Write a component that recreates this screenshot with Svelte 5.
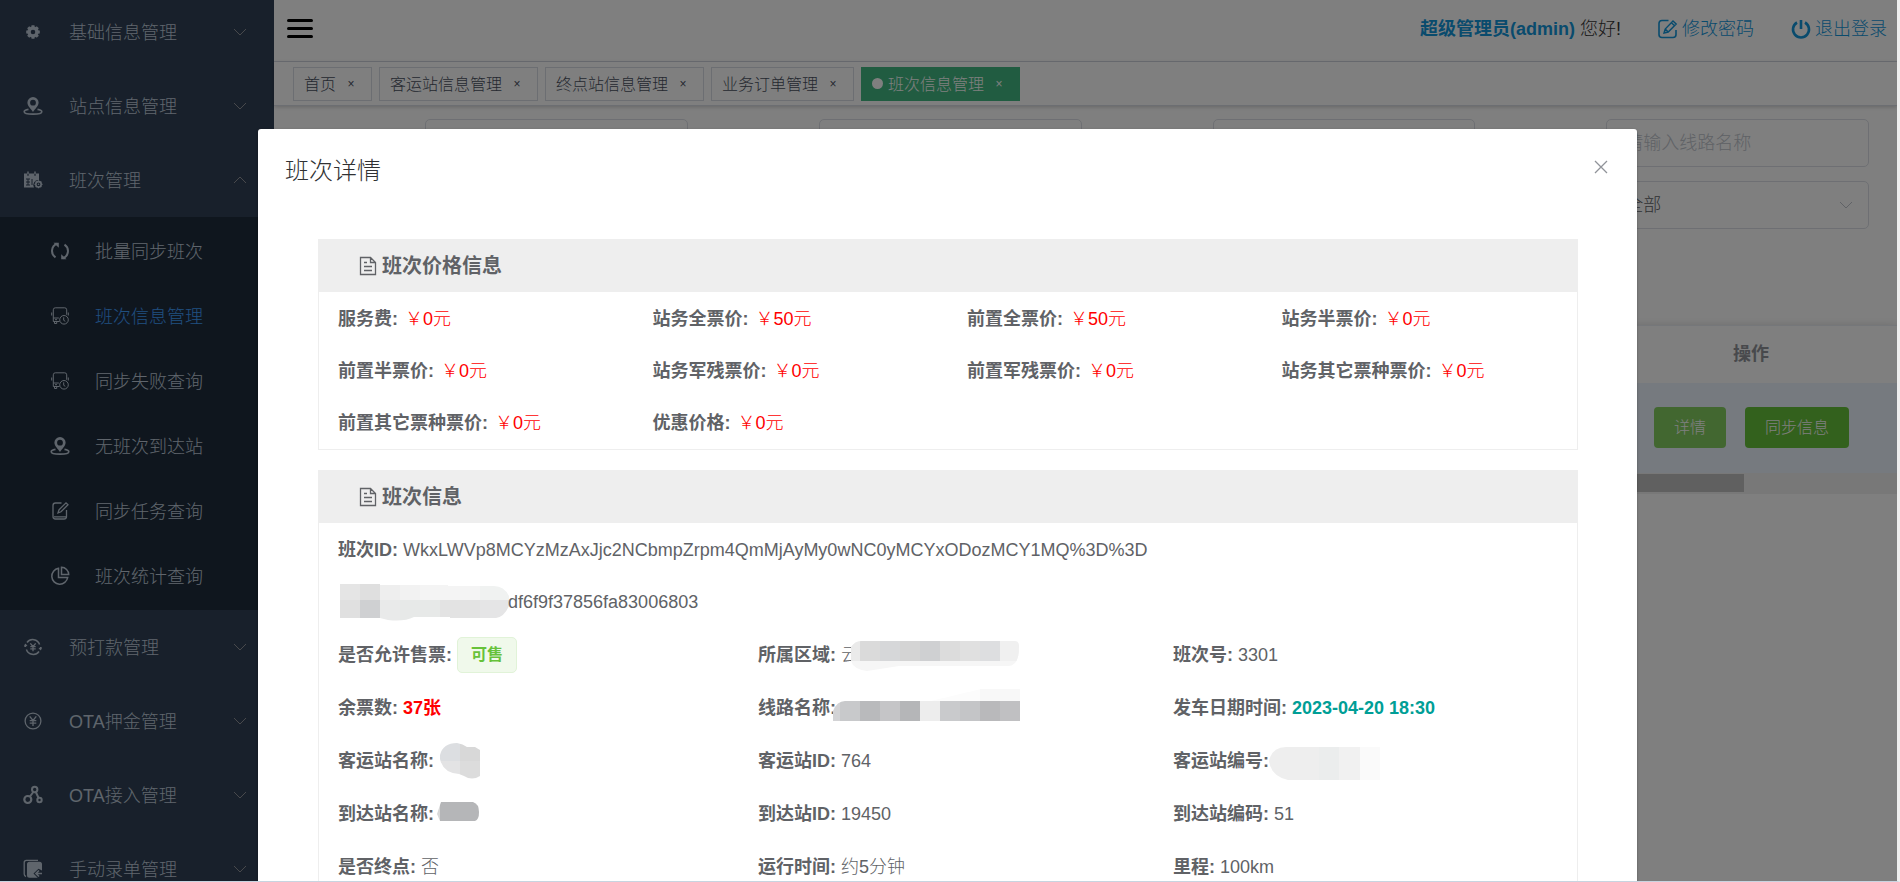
<script>
    const menu = [
        { label: '基础信息管理', icon: 'gear' },
        { label: '站点信息管理', icon: 'pin' },
        {
            label: '班次管理',
            icon: 'calendar',
            children: [
                { label: '批量同步班次', icon: 'sync' },
                { label: '班次信息管理', icon: 'bus', active: true },
                { label: '同步失败查询', icon: 'bus' },
                { label: '无班次到达站', icon: 'pin' },
                { label: '同步任务查询', icon: 'edit' },
                { label: '班次统计查询', icon: 'pie' }
            ]
        },
        { label: '预打款管理', icon: 'yenCycle' },
        { label: 'OTA押金管理', icon: 'yen' },
        { label: 'OTA接入管理', icon: 'nodes' },
        { label: '手动录单管理', icon: 'record' }
    ];

    let tabs = $state([
        { label: '首页' },
        { label: '客运站信息管理' },
        { label: '终点站信息管理' },
        { label: '业务订单管理' },
        { label: '班次信息管理', active: true }
    ]);

    const prices = [
        ['服务费', 0],
        ['站务全票价', 50],
        ['前置全票价', 50],
        ['站务半票价', 0],
        ['前置半票价', 0],
        ['站务军残票价', 0],
        ['前置军残票价', 0],
        ['站务其它票种票价', 0],
        ['前置其它票种票价', 0],
        ['优惠价格', 0]
    ];

    // blocks: [x, y, width, height, colour], y counted from the middle of the row
    const masks = {
        token: {
            width: 170,
            clip: 'M2 -18H42V-17H110V-16H156Q166 -16 171 -6V4Q166 15 158 16H112V15H76Q66 20 50 18L42 16H2Z',
            blocks: [
                [2, -18, 20, 18, '#e5e5e5'], [22, -18, 20, 18, '#dfdfdf'], [42, -18, 20, 18, '#eeeeee'],
                [62, -18, 20, 18, '#f2f2f2'], [82, -18, 60, 18, '#f4f4f4'], [142, -18, 30, 18, '#f0f2f1'],
                [2, -2, 20, 20, '#e0e0e0'], [22, -2, 20, 20, '#cfd0d2'], [42, -2, 20, 22, '#e9eaea'],
                [62, -2, 40, 22, '#e7e9e8'], [102, -2, 40, 20, '#e3e3e3'], [142, -2, 30, 20, '#e5e5e6']
            ]
        },
        region: {
            width: 150,
            clip: 'M-8 -8Q-4 -14 2 -14H156Q160 -14 160 -8Q160 10 150 11H40L8 16Q-6 14 -8 6Z',
            blocks: [
                [-9, -14, 170, 30, '#f6f6f6'], [-9, -14, 10, 20, '#eaeaea'], [1, -14, 20, 20, '#dadada'],
                [21, -14, 20, 20, '#d6d7d9'], [41, -14, 20, 20, '#d4d4d4'], [61, -14, 20, 20, '#cfd0d2'],
                [81, -14, 20, 20, '#dcdcdc'], [101, -14, 20, 20, '#e0e0e0'], [121, -14, 20, 20, '#dddee0'],
                [141, -14, 20, 20, '#f0f0f0']
            ]
        },
        line: {
            width: 180,
            clip: 'M-8 13V3Q-4 -7 4 -7H90L140 -19H179V13Z',
            blocks: [
                [90, -19, 50, 12, '#fcfcfc'], [139, -19, 40, 12, '#f8f8f8'], [-8, -7, 7, 20, '#d3d3d5'],
                [-1, -7, 20, 20, '#c8c9cb'], [19, -7, 20, 20, '#b9babc'], [39, -7, 20, 20, '#c5c5c7'],
                [59, -7, 20, 20, '#b5b6b8'], [79, -7, 20, 20, '#ededed'], [99, -7, 20, 20, '#c9cacc'],
                [119, -7, 20, 20, '#c4c5c7'], [139, -7, 20, 20, '#b9b9bb'], [159, -7, 20, 20, '#c0c0c2']
            ]
        },
        station: {
            width: 42,
            clip: 'M1 -6Q4 -18 18 -18Q24 -17 28 -14H36L41 -11V15Q33 20 25 15L20 13Q4 12 1 -2Z',
            blocks: [
                [1, -18, 20, 18, '#dcdee1'], [21, -18, 20, 18, '#d8d8d8'],
                [1, 0, 20, 18, '#e3e3e4'], [21, 0, 20, 18, '#dcdcdc']
            ]
        },
        code: {
            width: 108,
            clip: 'M-5 0Q-2 -14 12 -14H106V19H14Q-3 15 -5 0Z',
            blocks: [
                [-5, -14, 50, 33, '#eeeeee'], [45, -14, 20, 33, '#ebeded'],
                [65, -14, 21, 33, '#f1f1f1'], [86, -14, 20, 33, '#fafafa']
            ]
        },
        arrival: {
            width: 40,
            clip: 'M-2 0L2 -12H34Q40 -10 40 -2Q40 6 36 7H1Z',
            blocks: [[-2, -13, 3, 20, '#d8d8d8'], [1, -13, 40, 20, '#b5b6b8']]
        }
    };

    const details = [
        { label: '是否允许售票', kind: 'tag', value: '可售' },
        { label: '所属区域', value: '云', mask: 'region' },
        { label: '班次号', value: '3301' },
        { label: '余票数', kind: 'red', value: '37张' },
        { label: '线路名称', mask: 'line' },
        { label: '发车日期时间', kind: 'teal', value: '2023-04-20 18:30' },
        { label: '客运站名称', mask: 'station' },
        { label: '客运站ID', value: '764' },
        { label: '客运站编号', mask: 'code' },
        { label: '到达站名称', mask: 'arrival' },
        { label: '到达站ID', value: '19450' },
        { label: '到达站编码', value: '51' },
        { label: '是否终点', value: '否' },
        { label: '运行时间', value: '约5分钟' },
        { label: '里程', value: '100km' }
    ];

    const queries = ['班次ID', '客运站名称', '到达站名称'];

    let visible = $state(true);

    function closeTab(tab) {
        tabs = tabs.filter(t => t.label !== tab.label);
    }
</script>

{#snippet icon(name)}
    <svg class="icon" viewBox="0 0 20 20" fill="none" stroke="currentColor" stroke-width="1.3" aria-hidden="true">
        {#if name === 'gear'}
            <circle cx="10" cy="10" r="4" stroke-width="3.4" />
            <path d="M10 3.2v2M10 14.8v2M3.2 10h2M14.8 10h2M5.2 5.2l1.4 1.4M13.4 13.4l1.4 1.4M5.2 14.8l1.4-1.4M13.4 6.6l1.4-1.4" stroke-width="3" />
        {:else if name === 'pin'}
            <path fill="currentColor" stroke="none" fill-rule="evenodd" d="M10 1a5.6 5.6 0 0 1 5.6 5.6c0 3.4-3.4 6.2-5.6 9.4-2.2-3.2-5.6-6-5.6-9.4A5.6 5.6 0 0 1 10 1zm0 2.8a2.9 2.9 0 1 0 0 5.8 2.9 2.9 0 0 0 0-5.8z" />
            <path d="M5.5 13.4C3 13.8 1.2 14.7 1.2 15.7c0 1.5 4 2.4 8.8 2.4s8.8-.9 8.800-2.400c0-1-1.800-1.900-4.300-2.300" stroke-width="1.6" />
        {:else if name === 'calendar'}
            <path fill="currentColor" stroke="none" d="M1 3.5h3v2h2v-2h5v2h2v-2h3V10a5 5 0 0 0-5 7.500H1z" />
            <path d="M5 1.5v3M12 1.5v3" stroke-width="1.5" />
            <path d="M3 9h4M5 9v6M3 12h4M3 15h4M9 9v6" stroke="#304156" stroke-width="1" />
            <circle cx="15.5" cy="14.3" r="2.7" stroke-width="1.6" />
            <path d="M15.5 10.300v1.300M15.500 17v1.300M11.500 14.300h1.300M18.200 14.300h1.300M12.700 11.500l1 1M17.300 16.100l1 1M12.700 17.100l1-1M17.300 12.500l1-1" />
            <circle cx="15.5" cy="14.3" r=".8" fill="currentColor" stroke="none" />
        {:else if name === 'sync'}
            <path d="M7 2.8a7.6 7.6 0 0 0-1.5 13.500M13 17.200a7.600 7.600 0 0 0 1.500-13.500" stroke-width="2" />
            <path d="M3.5 1.8h5.300v5zM16.500 18.200h-5.300v-5z" fill="currentColor" stroke="none" />
        {:else if name === 'bus'}
            <g stroke-width="1">
                <path d="M9.5 15.5H3.3V3.8q0-2 2-2h9.400q2 0 2 2v5M3.300 12h5.500M1.700 6.500v3M18.300 6.500v3M4.500 15.500v2h2.200v-2M5 13.700h2" />
                <circle cx="14" cy="13.8" r="4.3" />
                <path d="M13.7 11.300v3l1.600 1" />
            </g>
        {:else if name === 'edit'}
            <path d="M11.5 2H5.5Q3 2 3 4.500v11Q3 18 5.500 18h8.500q2.500 0 2.500-2.500V9M4 15.800h12" />
            <path d="M8 12l1-3.200L16 1.800l2 2-7 7z" />
        {:else if name === 'pie'}
            <path d="M8.5 2.300a8 8 0 1 0 9.200 9.200H8.500z" stroke-width="1.5" />
            <path d="M11.5 1.300a7.300 7.300 0 0 1 7.200 7.200h-7.200z" stroke-width="1.5" />
        {:else if name === 'yen'}
            <circle cx="10" cy="10" r="7.9" />
            <path d="M6.7 5.300L10 9.500l3.300-4.200M10 9.500v5.500M6.700 9.700h6.600M6.700 12.200h6.600" />
        {:else if name === 'yenCycle'}
            <path d="M4 5.500a7.200 7.200 0 0 1 12.600 2M16 14.500a7.200 7.200 0 0 1-12.600-2M2.300 10V7.500M17.700 10v2.500" stroke-width="1.5" />
            <path d="M1 9.500l1.500-3 2 2.500zM19 10.500l-1.500 3-2-2.500z" fill="currentColor" stroke="none" />
            <path d="M7.300 6.300L10 9.500l2.700-3.200M10 9.500v4.700M7.300 9.700h5.400M7.300 11.800h5.400" />
        {:else if name === 'nodes'}
            <circle cx="11.7" cy="4.5" r="2.7" stroke-width="2" />
            <circle cx="4.8" cy="14.5" r="3.5" stroke-width="2.2" />
            <circle cx="16.5" cy="15" r="2.2" stroke-width="2" />
            <path d="M10.300 7L7 11.500M12.800 7l2.800 6" stroke-width="2" />
        {:else if name === 'record'}
            <path d="M3 17.500Q1.200 17 1.200 15V3.500q0-2.200 2.200-2.200H15" />
            <path fill="currentColor" stroke="none" d="M6.500 2.800h10q2.500 0 2.500 2.500v6.200l-3.500-1.700-5 4.700 4.200 4.300H6.500Q4 18.800 4 16.300v-11q0-2.500 2.500-2.500z" />
            <path d="M16 11.500l-3 3 3 3M13.300 14.500H19" stroke-width="1.7" />
        {:else if name === 'doc'}
            <path d="M2.500 1.500h10l5 5v12h-15zM12.500 1.500v5h5M6 6.500h3M6 10.500h8M6 14.500h8" />
        {:else if name === 'write'}
            <path d="M10.500 1.500H4Q1 1.500 1 4.500v11q0 3 3 3h11q3 0 3-3V11" stroke-width="1.6" />
            <path d="M6 14l1.200-4L15 2l3.200 3-8 8zM13.500 3.700l3 3M7.200 10l3 3" stroke-width="1.4" />
        {:else if name === 'power'}
            <path d="M6 3.500a8 8 0 1 0 8 0M10 1v9" stroke-width="2.6" />
        {/if}
    </svg>
{/snippet}

{#snippet arrow(up)}
    <svg class="arrow" class:up viewBox="0 0 12 12" fill="none" stroke="currentColor" aria-hidden="true">
        <path d="M0 3l6 6 6-6" />
    </svg>
{/snippet}

{#snippet mosaic(name)}
    <svg class="mosaic" width={masks[name].width} height="36" viewBox="0 -18 {masks[name].width} 36" aria-hidden="true">
        <clipPath id="clip-{name}"><path d={masks[name].clip} /></clipPath>
        <g clip-path="url(#clip-{name})">
            {#each masks[name].blocks as [x, y, width, height, fill]}
                <rect {x} {y} {width} {height} {fill} />
            {/each}
        </g>
    </svg>
{/snippet}

<div class="app">
    <nav class="sidebar">
        <ul class="menu">
            {#each menu as item}
                <li>
                    <a class="menu-item" href="#menu">
                        {@render icon(item.icon)}
                        <span>{item.label}</span>
                        {@render arrow(!!item.children)}
                    </a>
                    {#if item.children}
                        <ul class="submenu">
                            {#each item.children as child}
                                <li>
                                    <a class="submenu-item" class:active={child.active} href="#menu">
                                        {@render icon(child.icon)}
                                        <span>{child.label}</span>
                                    </a>
                                </li>
                            {/each}
                        </ul>
                    {/if}
                </li>
            {/each}
        </ul>
    </nav>

    <main class="main">
        <header class="navbar">
            <button class="hamburger" aria-label="菜单"><i></i><i></i><i></i></button>
            <div class="user">
                <span class="hello"><b>超级管理员(admin)</b> 您好!</span>
                <a href="#password">{@render icon('write')}修改密码</a>
                <a href="#logout">{@render icon('power')}退出登录</a>
            </div>
        </header>

        <div class="tags">
            {#each tabs as tab (tab.label)}
                <div class="tag-view" class:active={tab.active}>
                    <a href="#tab">{tab.label}</a>
                    <button aria-label="关闭" onclick={() => closeTab(tab)}>×</button>
                </div>
            {/each}
        </div>

        <form class="filters">
            {#each queries as query}
                <input type="text" aria-label={query} />
            {/each}
            <input type="text" aria-label="线路名称" placeholder="请输入线路名称" />
            <div class="select">
                <select aria-label="状态">
                    <option>全部</option>
                </select>
                {@render arrow(false)}
            </div>
        </form>

        <div class="table-wrap">
            <table>
                <thead>
                    <tr><th>操作</th></tr>
                </thead>
                <tbody>
                    <tr>
                        <td>
                            <div class="actions">
                                <button class="light">详情</button>
                                <button>同步信息</button>
                            </div>
                        </td>
                    </tr>
                </tbody>
            </table>
            <div class="scroll-track"><div class="scroll-thumb"></div></div>
        </div>
    </main>

    {#if visible}
        <div class="overlay">
            <div class="dialog" role="dialog" aria-modal="true" aria-labelledby="dialog-title">
                <div class="dialog-header">
                    <h2 id="dialog-title">班次详情</h2>
                    <button class="close" aria-label="关闭" onclick={() => (visible = false)}>
                        <svg viewBox="0 0 14 14" fill="none" stroke="currentColor" stroke-width="1.3">
                            <path d="M1 1l12 12M13 1L1 13" />
                        </svg>
                    </button>
                </div>

                <section class="panel">
                    <h3>{@render icon('doc')}班次价格信息</h3>
                    <div class="grid prices">
                        {#each prices as [label, price]}
                            <div class="field"><b>{label}:</b><span class="price">￥{price}元</span></div>
                        {/each}
                    </div>
                </section>

                <section class="panel">
                    <h3>{@render icon('doc')}班次信息</h3>
                    <div class="grid">
                        <div class="field"><b>班次ID:</b><span>WkxLWVp8MCYzMzAxJjc2NCbmpZrpm4QmMjAyMy0wNC0yMCYxODozMCY1MQ%3D%3D</span></div>
                        <div class="field hash">{@render mosaic('token')}<span>df6f9f37856fa83006803</span></div>
                    </div>
                    <div class="grid details">
                        {#each details as item}
                            <div class="field">
                                <b>{item.label}:</b>
                                <span class={item.kind}>{item.value}{#if item.mask}{@render mosaic(item.mask)}{/if}</span>
                            </div>
                        {/each}
                    </div>
                </section>
            </div>
        </div>
    {/if}
</div>

<style>
    :global(body) {
        overflow: hidden;
        background: #fff;
    }

    .app {
        --text: #606266;
        position: relative;
        display: flex;
        height: 100vh;
        box-sizing: border-box;
        overflow: hidden;
        border-right: 3px solid #eee;
        border-bottom: 1px solid #c8d4e0;
        font: 300 18px/24px "Liberation Sans", "Noto Sans CJK SC", sans-serif;
        color: var(--text);
    }

    a {
        color: inherit;
        text-decoration: none;
    }

    button,
    input,
    select {
        font: inherit;
    }

    button {
        padding: 0;
        border: 0;
        background: none;
        color: inherit;
        cursor: pointer;
    }

    .icon {
        width: 20px;
        height: 20px;
        flex-shrink: 0;
    }

    .arrow {
        width: 12px;
        height: 12px;
        flex-shrink: 0;
    }

    .arrow.up {
        transform: rotate(180deg);
    }

    /* sidebar */
    .sidebar {
        width: 274px;
        flex-shrink: 0;
        overflow: hidden;
        background: #304156;
        color: #bfcbd9;
    }

    .menu,
    .submenu {
        margin: 0;
        padding: 0;
        list-style: none;
    }

    /* list is scrolled down a little */
    .menu {
        margin-top: -5px;
    }

    .menu-item,
    .submenu-item {
        display: flex;
        align-items: center;
    }

    .menu-item span,
    .submenu-item span {
        padding-top: 2px;
    }

    .menu-item {
        height: 74px;
        padding: 0 28px 0 23px;
        gap: 26px;
    }

    .menu-item .arrow {
        margin-left: auto;
        color: #909399;
    }

    .submenu {
        padding: 1px 0 2px;
        background: #1f2d3d;
    }

    .submenu-item {
        height: 65px;
        padding-left: 50px;
        gap: 25px;
    }

    .submenu-item.active span {
        color: #409eff;
    }

    /* top bar */
    .main {
        flex: 1;
        min-width: 0;
        background: #fff;
    }

    .navbar {
        display: flex;
        justify-content: space-between;
        align-items: center;
        height: 62px;
        padding: 0 10px 4px 13px;
        box-sizing: border-box;
        border-bottom: 1px solid #d8dce5;
    }

    .hamburger {
        display: flex;
        flex-direction: column;
        gap: 5px;
        width: 26px;
    }

    .hamburger i {
        height: 3px;
        border-radius: 2px;
        background: #000;
    }

    .user {
        display: flex;
        gap: 37px;
    }

    .user a {
        display: flex;
        align-items: center;
        gap: 4px;
    }

    .user a,
    .user b {
        color: #1296db;
    }

    .hello {
        color: #333;
    }

    .tags {
        display: flex;
        align-items: center;
        gap: 7px;
        height: 43px;
        padding-left: 19px;
        border-bottom: 1px solid #d8dce5;
        box-shadow: 0 1px 4px rgba(0, 0, 0, 0.2);
        font-size: 16px;
    }

    .tag-view {
        display: flex;
        align-items: center;
        gap: 5px;
        height: 32px;
        padding: 0 10px;
        border: 1px solid #d8dce5;
        color: #495060;
    }

    .tag-view a {
        padding-top: 2px;
    }

    .tag-view button {
        width: 20px;
        font-size: 12px;
    }

    .tag-view.active {
        border-color: #42b983;
        background: #42b983;
        color: #fff;
    }

    .tag-view.active::before {
        content: "";
        width: 11px;
        height: 11px;
        border-radius: 50%;
        background: #fff;
    }

    /* filters */
    .filters {
        display: grid;
        grid-template-columns: repeat(4, 1fr);
        row-gap: 14px;
        padding: 13px 28px 0 20px;
    }

    .filters input,
    .select {
        box-sizing: border-box;
        height: 48px;
        margin-left: 131px;
        border: 1px solid #dcdfe6;
        border-radius: 5px;
        background: #fff;
        color: var(--text);
        min-width: 0;
    }

    .filters input {
        padding: 0 18px;
    }

    .filters input::placeholder {
        color: #c0c4cc;
    }

    .select {
        grid-column: 4;
        display: flex;
        align-items: center;
        padding: 0 16px 0 18px;
    }

    .select select {
        flex: 1;
        appearance: none;
        border: 0;
        background: none;
        color: inherit;
    }

    .select .arrow {
        color: #c0c4cc;
    }

    /* result table */
    .table-wrap {
        margin-top: 96px;
    }

    table {
        width: 100%;
        border-collapse: collapse;
        border-top: 1px solid #ebeef5;
        box-shadow: 0 2px 10px rgba(0, 0, 0, 0.2);
    }

    th {
        height: 57px;
        padding: 0 128px 0 0;
        box-sizing: border-box;
        text-align: right;
        font-weight: 700;
        color: #909399;
    }

    td {
        height: 90px;
        padding: 0 48px 0 0;
        box-sizing: border-box;
        background: #ecf5ff;
        vertical-align: middle;
    }

    .actions {
        display: flex;
        justify-content: flex-end;
        gap: 19px;
    }

    .actions button {
        height: 41px;
        padding: 0 20px;
        border-radius: 4px;
        background: #67c23a;
        color: #fff;
        font-size: 16px;
    }

    .actions .light {
        background: #85ce61;
    }

    .scroll-track {
        padding: 1px 0 2px;
        background: #f1f1f1;
    }

    .scroll-thumb {
        width: calc(100% - 153px);
        height: 18px;
        background: #c1c1c1;
    }

    /* dialog */
    .overlay {
        position: absolute;
        inset: 0;
        padding: 129px 260px 0 258px;
        background: rgba(0, 0, 0, 0.5);
    }

    .dialog {
        padding: 26px 59px 40px 60px;
        border-radius: 3px;
        background: #fff;
        box-shadow: 0 1px 3px rgba(0, 0, 0, 0.3);
    }

    .dialog-header {
        display: flex;
        justify-content: space-between;
        align-items: flex-start;
        height: 84px;
        margin: 0 -30px 0 -33px;
    }

    h2 {
        margin: 0;
        font-size: 24px;
        line-height: 32px;
        font-weight: 300;
        color: #303133;
    }

    .close {
        height: 24px;
        color: #909399;
    }

    .close svg {
        display: block;
        width: 14px;
        height: 14px;
    }

    .panel {
        margin-bottom: 20px;
        border: 1px solid #eee;
    }

    h3 {
        display: flex;
        align-items: center;
        gap: 4px;
        height: 52px;
        margin: 0;
        padding-left: 39px;
        background: #eee;
        font-size: 20px;
    }

    .grid {
        display: grid;
        grid-auto-rows: 52px;
        padding-top: 1px;
    }

    .prices {
        grid-template-columns: repeat(4, 1fr);
    }

    .details {
        grid-template-columns: 420fr 415fr 423fr;
        grid-auto-rows: 53px;
        padding-top: 0;
    }

    .field {
        display: flex;
        align-items: center;
        gap: 5px;
        padding-left: 19px;
        white-space: nowrap;
    }

    .field.hash {
        gap: 0;
    }

    .field span {
        display: flex;
        align-items: center;
    }

    .prices .field {
        gap: 7px;
    }

    .price {
        color: #f00;
    }

    .red,
    .teal,
    b {
        font-family: "Liberation Sans Narrow", "Liberation Sans", "Noto Sans CJK SC", sans-serif;
        font-weight: 700;
    }

    .red {
        color: #f00;
    }

    .teal {
        color: #009e96;
    }

    .field .tag {
        height: 34px;
        padding: 0 13px;
        border: 1px solid #e1f3d8;
        border-radius: 5px;
        background: #f0f9eb;
        color: #67c23a;
        font-size: 16px;
        font-weight: 700;
    }

    .mosaic {
        overflow: visible;
        flex-shrink: 0;
    }
</style>
